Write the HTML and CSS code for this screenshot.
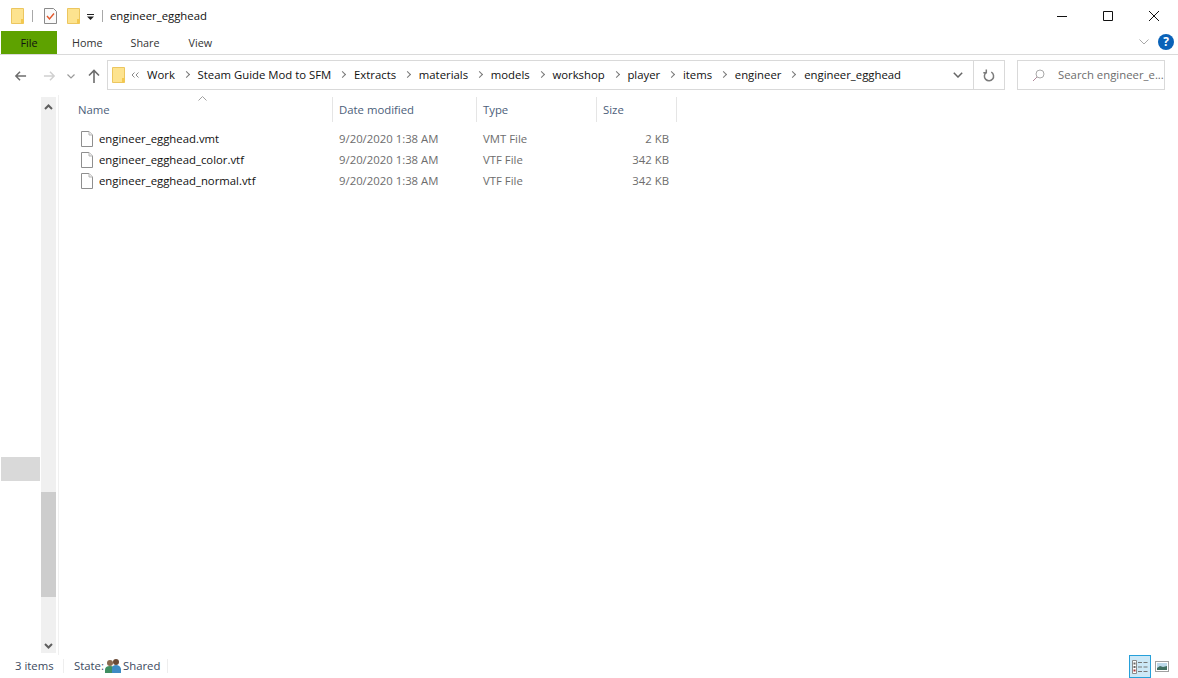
FILE: index.html
```html
<!DOCTYPE html>
<html lang="en">
<head>
<meta charset="utf-8">
<title>engineer_egghead</title>
<link rel="stylesheet" href="styles.css">
</head>
<body>
<div class="window">
  <header class="titlebar">
    <svg class="folder qa-first" viewBox="0 0 13 16"><use href="#folder"/></svg>
    <span class="qa-sep"></span>
    <svg class="qa-check" viewBox="0 0 13 16"><path d="M.5.5h9l3 3v12H.5z" fill="#fafafa" stroke="#8a8a8a"/><path d="M3 8l2.500 3L10 5.500" fill="none" stroke="#e2562a" stroke-width="1.400"/></svg>
    <svg class="folder qa-folder2" viewBox="0 0 13 16"><use href="#folder"/></svg>
    <svg class="qa-down" viewBox="0 0 7 6"><path d="M0 0h7v1H0zM0 2.500h7L3.500 6z" fill="#222"/></svg>
    <span class="qa-sep sep2"></span>
    <span class="title">engineer_egghead</span>
    <div class="controls">
      <svg viewBox="0 0 12 12"><path d="M1 6.500h10" stroke="#111" fill="none"/></svg>
      <svg viewBox="0 0 12 12"><path d="M1.500 1.500h9v9h-9z" stroke="#111" fill="none"/></svg>
      <svg viewBox="0 0 12 12"><path d="M1 1l10 10M11 1L1 11" stroke="#111" fill="none"/></svg>
    </div>
  </header>

  <nav class="ribbon">
    <span class="tab file">File</span>
    <span class="tab home">Home</span>
    <span class="tab share">Share</span>
    <span class="tab view">View</span>
    <div class="ribbon-right">
      <svg class="collapse" viewBox="0 0 10 6"><path d="M.5.500L5 5 9.500.5" fill="none" stroke="#a9a9a9"/></svg>
      <span class="help">?</span>
    </div>
  </nav>

  <div class="addressrow">
    <div class="navbtns">
      <svg class="nav-back" viewBox="0 0 14 12"><path d="M13 6H2M6.500 1.500L2 6l4.500 4.500" fill="none" stroke="#6d6d6d" stroke-width="1.600"/></svg>
      <svg class="nav-forward" viewBox="0 0 14 12"><path d="M1 6h11M7.500 1.500L12 6l-4.500 4.500" fill="none" stroke="#d0d0d0" stroke-width="1.600"/></svg>
      <svg class="nav-recent" viewBox="0 0 8 5"><path d="M.5.500L4 4 7.500.5" fill="none" stroke="#9a9a9a" stroke-width="1.200"/></svg>
      <svg class="nav-up" viewBox="0 0 12 14"><path d="M6 14V2M1 6.500L6 1.500l5 5" fill="none" stroke="#6d6d6d" stroke-width="1.600"/></svg>
    </div>
    <div class="address">
      <svg class="folder addr-folder" viewBox="0 0 13 16"><use href="#folder"/></svg>
      <svg class="chev-dbl" viewBox="0 0 8 6"><path d="M3.500.5L1 3l2.500 2.500M7.500.5L5 3l2.500 2.500" fill="none" stroke="#8a8a8a"/></svg>
      <ol class="crumbs">
        <li>Work</li>
        <li>Steam Guide Mod to SFM</li>
        <li>Extracts</li>
        <li>materials</li>
        <li>models</li>
        <li>workshop</li>
        <li>player</li>
        <li>items</li>
        <li>engineer</li>
        <li>engineer_egghead</li>
      </ol>
      <span class="addr-drop"><svg viewBox="0 0 10 6"><path d="M.8.800L5 5 9.200.8" fill="none" stroke="#666" stroke-width="1.500"/></svg></span>
      <span class="addr-refresh"><svg viewBox="0 0 12 13"><path d="M8.300 3.200A4.600 4.600 0 1 1 3.200 3.500M3.300 0.500v3.200H.3" fill="none" stroke="#7a7a7a" stroke-width="1.500"/></svg></span>
    </div>
    <div class="search">
      <svg viewBox="0 0 13 13"><circle cx="8" cy="5" r="4" fill="none" stroke="#a9a9a9"/><path d="M5 8l-4 4" stroke="#b08a9a" fill="none"/></svg>
      <span>Search engineer_e...</span>
    </div>
  </div>

  <div class="main">
    <aside class="navpane">
      <div class="navlist"><div class="nav-selected"></div></div>
      <div class="scrollbar">
        <svg class="arrow" viewBox="0 0 9 6"><path d="M1 5l3.500-3.500L8 5" fill="none" stroke="#5f5f5f" stroke-width="2"/></svg>
        <div class="thumb"></div>
        <svg class="arrow arrow-down" viewBox="0 0 9 6"><path d="M1 1l3.500 3.500L8 1" fill="none" stroke="#5f5f5f" stroke-width="2"/></svg>
      </div>
    </aside>
    <section class="files">
      <div class="cols head">
        <span class="col c-name">Name<svg class="sort" viewBox="0 0 9 5"><path d="M.5 4.500l4-4 4 4" fill="none" stroke="#a0a0a0"/></svg></span>
        <span class="col c-date">Date modified</span>
        <span class="col c-type">Type</span>
        <span class="col c-size">Size</span>
      </div>
      <div class="cols row">
        <span class="c-name"><svg class="doc" viewBox="0 0 12 16"><use href="#doc"/></svg>engineer_egghead.vmt</span>
        <span class="c-date">9/20/2020 1:38 AM</span>
        <span class="c-type">VMT File</span>
        <span class="c-size">2 KB</span>
      </div>
      <div class="cols row">
        <span class="c-name"><svg class="doc" viewBox="0 0 12 16"><use href="#doc"/></svg>engineer_egghead_color.vtf</span>
        <span class="c-date">9/20/2020 1:38 AM</span>
        <span class="c-type">VTF File</span>
        <span class="c-size">342 KB</span>
      </div>
      <div class="cols row">
        <span class="c-name"><svg class="doc" viewBox="0 0 12 16"><use href="#doc"/></svg>engineer_egghead_normal.vtf</span>
        <span class="c-date">9/20/2020 1:38 AM</span>
        <span class="c-type">VTF File</span>
        <span class="c-size">342 KB</span>
      </div>
    </section>
  </div>

  <footer class="status">
    <span class="count">3 items</span>
    <span class="divider"></span>
    <span class="state">State:
      <svg viewBox="0 0 16 15"><circle cx="5" cy="5" r="3" fill="#8a6a50"/><path d="M0 15v-3q0-4 5-4t5 4v3z" fill="#3f8f62"/><circle cx="11" cy="4" r="3" fill="#6a4a36"/><path d="M7 15v-4q0-4 4-4t5 4v4z" fill="#3d8bc4"/></svg>
      Shared</span>
    <span class="divider"></span>
    <div class="views">
      <span class="view-details"><svg viewBox="0 0 16 14"><path d="M.5.500h4v13h-4z" fill="#fff" stroke="#8a8a8a"/><path d="M1.500 2.500h2v2h-2zM1.500 6h2v2h-2z" fill="#666"/><path d="M1.500 9.500h2v2h-2z" fill="#a33"/><path d="M6 2.500h4M11.500 2.500h4M6 7h4M11.500 7h4M6 11.500h4M11.500 11.500h4" stroke="#777"/></svg></span>
      <svg class="view-large" viewBox="0 0 14 11"><rect x=".5" y=".5" width="13" height="10" fill="#fff" stroke="#a0a0a0"/><rect x="2" y="2" width="10" height="7" fill="#bcd9ea"/><path d="M2 7l3-2 3 1 4-1v4H2z" fill="#3f6f60"/></svg>
    </div>
  </footer>
</div>

<svg class="defs" aria-hidden="true">
  <symbol id="folder" viewBox="0 0 13 16"><path d="M.5.5h12v15H.5z" fill="#fde38f" stroke="#ecc65f"/><path d="M10 11h2.500v4.500H10z" fill="#f4c94f"/></symbol>
  <symbol id="doc" viewBox="0 0 12 16"><path d="M.5.500h7.500l3.500 3.500v11.500H.5z" fill="#fff" stroke="#8f8f8f"/><path d="M8 .5v3.500h3.500" fill="#eee" stroke="#b5b5b5"/></symbol>
</svg>
</body>
</html>
```

FILE: styles.css
```css
* { box-sizing: border-box; }
html, body { margin: 0; height: 100%; }
body { background: #fff; font-family: "Open Sans", "Noto Sans", sans-serif; font-size: 11.35px; color: #1a1a1a; overflow: hidden; }
svg { display: block; flex: none; }
.defs { width: 0; height: 0; }
.window { width: 1178px; height: 678px; display: flex; flex-direction: column; }

.titlebar { height: 31px; display: flex; align-items: center; padding-left: 11px; }
.folder { width: 13px; height: 16px; }
.qa-sep { width: 1px; height: 12px; background: #a8a8a8; margin-left: 8px; }
.qa-check { width: 13px; height: 16px; margin-left: 11px; }
.qa-folder2 { margin-left: 10px; }
.qa-down { width: 7px; height: 6px; margin-left: 7px; margin-top: 2px; }
.sep2 { margin-left: 8px; }
.title { margin-left: 7px; color: #111; }
.controls { margin-left: auto; display: flex; gap: 34px; padding-right: 18px; }
.controls svg { width: 12px; height: 12px; }

.ribbon { height: 24px; display: flex; align-items: stretch; border-bottom: 1px solid #dadada; padding-left: 1px; }
.tab { display: flex; align-items: center; color: #333; font-size: 10.8px; }
.file { width: 56px; background: #5ea200; color: #111; justify-content: center; }
.home { margin-left: 15px; }
.share { margin-left: 28px; }
.view { margin-left: 29px; }
.ribbon-right { margin-left: auto; display: flex; align-items: center; gap: 9px; padding-right: 4px; padding-bottom: 2px; }
.collapse { width: 10px; height: 6px; }
.help { width: 16px; height: 16px; border-radius: 50%; background: #0a62b8; color: #fff; font-weight: 700; font-size: 12px; line-height: 16px; text-align: center; }

.addressrow { height: 40px; display: flex; align-items: center; }
.navbtns { width: 107px; display: flex; align-items: center; padding-left: 14px; padding-top: 2px; }
.nav-back, .nav-forward { width: 13px; height: 12px; }
.nav-forward { margin-left: 16px; }
.nav-recent { width: 8px; height: 5px; margin-left: 11px; }
.nav-up { width: 12px; height: 14px; margin-left: 13px; }
.address { width: 898px; height: 30px; border: 1px solid #d9d9d9; display: flex; align-items: center; padding-left: 4px; }
.chev-dbl { margin-left: 6px; margin-right: 8px; width: 8px; height: 6px; }
.crumbs { list-style: none; margin: 0; padding: 0 0 2px; display: flex; color: #111; white-space: nowrap; }
.crumbs li { display: flex; align-items: center; }
.crumbs li + li::before { content: ""; width: 4px; height: 4px; border-top: 1.500px solid #777; border-right: 1.500px solid #777; transform: rotate(45deg); margin: 0 8.700px 0 9px; }
.addr-drop { margin-left: auto; width: 30px; height: 100%; display: flex; align-items: center; justify-content: center; }
.addr-drop svg { width: 10px; height: 6px; }
.addr-refresh { width: 31px; height: 100%; border-left: 1px solid #d9d9d9; display: flex; align-items: center; justify-content: center; }
.addr-refresh svg { width: 12px; height: 13px; }
.search { width: 148px; height: 30px; margin-left: 12px; border: 1px solid #d9d9d9; display: flex; align-items: center; padding-left: 14px; color: #6d6d6d; }
.search svg { width: 13px; height: 13px; margin-right: 13px; }
.search span { white-space: nowrap; padding-bottom: 2px; }

.main { flex: 1; display: flex; min-height: 0; }
.navpane { width: 59px; display: flex; border-right: 1px solid #f0f0f0; padding: 2px 0; }
.navlist { width: 41px; padding: 360px 0 0 1px; }
.nav-selected { width: 39px; height: 24px; background: #d9d9d9; }
.scrollbar { width: 15px; background: #f0f0f0; display: flex; flex-direction: column; align-items: center; padding-top: 7px; }
.arrow { width: 9px; height: 6px; }
.thumb { width: 15px; height: 105px; background: #cdcdcd; margin-top: 382px; }
.arrow-down { margin-top: 46px; }

.files { flex: 1; padding-top: 2px; }
.cols { display: grid; grid-template-columns: 274px 144px 120px 80px; }
.head { height: 25px; margin-bottom: 6px; color: #4c607a; }
.col { position: relative; display: flex; align-items: center; padding-left: 6px; border-right: 1px solid #e5e5e5; }
.head .c-name { padding-left: 19px; }
.sort { position: absolute; left: 139px; top: -1px; width: 9px; height: 5px; }
.row { height: 21px; align-items: center; color: #6d6d6d; }
.row .c-date, .row .c-type { padding-left: 6px; }
.row .c-name { display: flex; align-items: center; padding-left: 22px; color: #111; }
.row .c-size { text-align: right; padding-right: 8px; }
.doc { width: 12px; height: 16px; margin-right: 6px; }

.status { height: 23px; display: flex; align-items: center; color: #3c4a60; padding-left: 15px; padding-bottom: 2px; }
.count { width: 48px; }
.divider { width: 1px; height: 14px; background: #eeeeee; }
.state { display: flex; align-items: center; gap: 1px; margin-left: 10px; width: 93px; }
.state svg { width: 16px; height: 15px; margin-right: 1px; }
.views { margin-left: auto; display: flex; align-items: center; gap: 4px; padding-right: 9px; align-self: flex-start; }
.view-details { width: 22px; height: 23px; background: #cce8f7; border: 1px solid #26a0da; display: flex; align-items: center; justify-content: center; }
.view-details svg { width: 16px; height: 14px; }
.view-large { width: 14px; height: 11px; }
```
